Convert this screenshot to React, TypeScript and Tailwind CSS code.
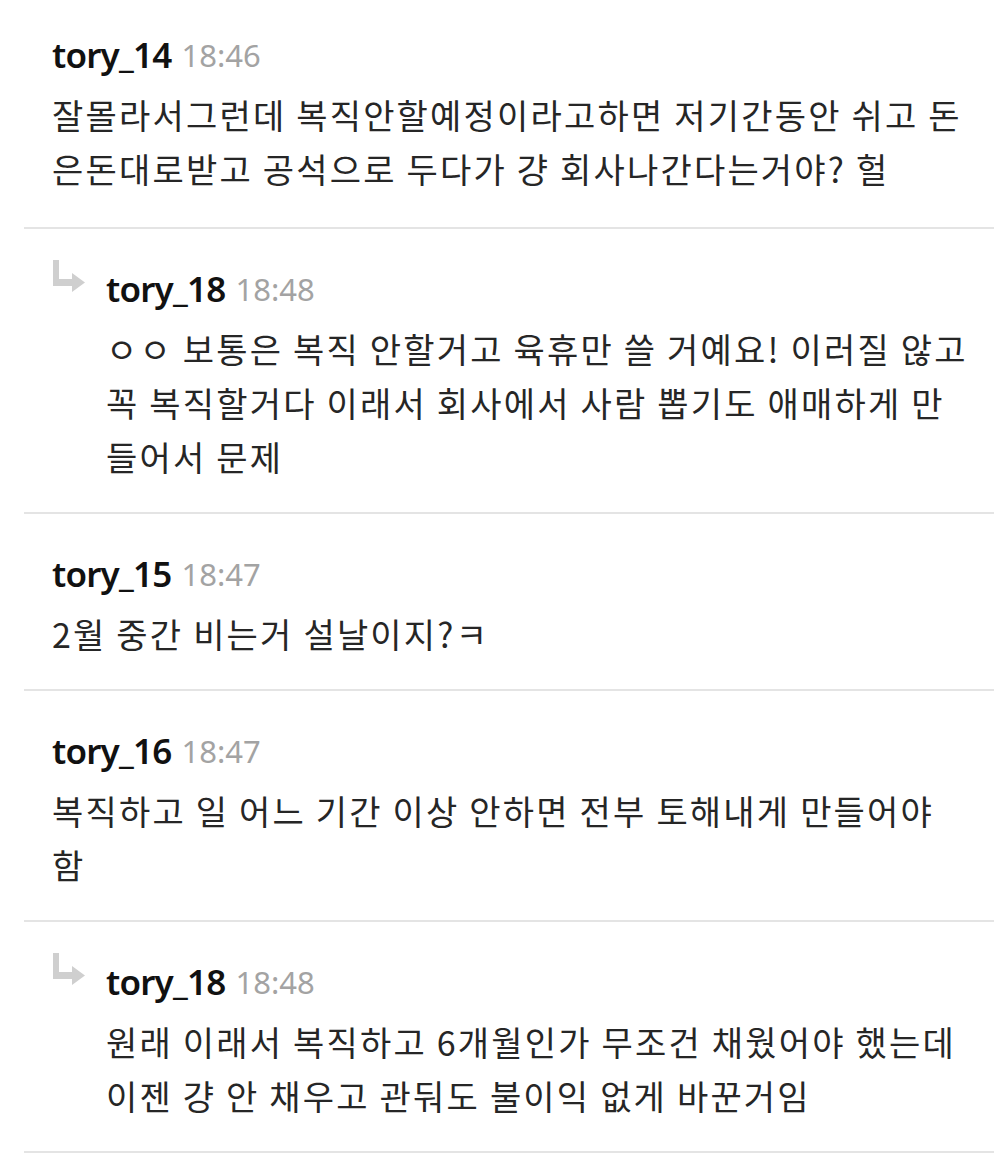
const comments = [
  {
    user: 'tory_14',
    time: '18:46',
    reply: false,
    first: true,
    text: '잘몰라서그런데 복직안할예정이라고하면 저기간동안 쉬고 돈은돈대로받고 공석으로 두다가 걍 회사나간다는거야? 헐',
  },
  {
    user: 'tory_18',
    time: '18:48',
    reply: true,
    text: 'ㅇㅇ 보통은 복직 안할거고 육휴만 쓸 거예요! 이러질 않고 꼭 복직할거다 이래서 회사에서 사람 뽑기도 애매하게 만들어서 문제',
  },
  {
    user: 'tory_15',
    time: '18:47',
    reply: false,
    text: '2월 중간 비는거 설날이지?ㅋ',
  },
  {
    user: 'tory_16',
    time: '18:47',
    reply: false,
    text: '복직하고 일 어느 기간 이상 안하면 전부 토해내게 만들어야 함',
  },
  {
    user: 'tory_18',
    time: '18:48',
    reply: true,
    text: '원래 이래서 복직하고 6개월인가 무조건 채웠어야 했는데 이젠 걍 안 채우고 관둬도 불이익 없게 바꾼거임',
  },
];

function ReplyArrow() {
  return (
    <svg width="34" height="34" viewBox="0 0 34 34" className="shrink-0">
      <path d="M0 0 H6 V19 H21 V26 H0 Z" fill="#cfcfcf" />
      <path d="M19 13 L32 22.5 L19 32 Z" fill="#cfcfcf" />
    </svg>
  );
}

function Comment({ c }: { c: (typeof comments)[number] }) {
  return (
    <div
      className={`flex border-b-2 border-[#e4e4e4] ${c.first ? 'pt-[35px] pb-[31px]' : 'pt-[40px] pb-[28px]'} ${
        c.reply ? 'pl-[29px]' : 'pl-[28px]'
      }`}
    >
      {c.reply && (
        <div className="-mt-[9px] w-[53px] shrink-0">
          <ReplyArrow />
        </div>
      )}
      <div className="flex min-w-0 flex-1 flex-col gap-[13px]">
        <div className="flex h-[40px] items-center gap-[10px]">
          <span className="font-['Noto_Sans'] text-[35px] font-semibold tracking-[-0.8px] text-[#111]">
            {c.user}
          </span>
          <span className="font-['Noto_Sans'] text-[31px] text-[#a3a3a3]">{c.time}</span>
        </div>
        <p className="pr-[24px] font-['Noto_Sans_CJK_KR',sans-serif] text-[34px] leading-[54px] tracking-[2.2px] text-[#262626]">
          {c.text}
        </p>
      </div>
    </div>
  );
}

export default function App() {
  return (
    <div className="min-h-[1157px] bg-white pl-[24px] pr-[9px]">
      {comments.map((c, i) => (
        <Comment key={i} c={c} />
      ))}
    </div>
  );
}
